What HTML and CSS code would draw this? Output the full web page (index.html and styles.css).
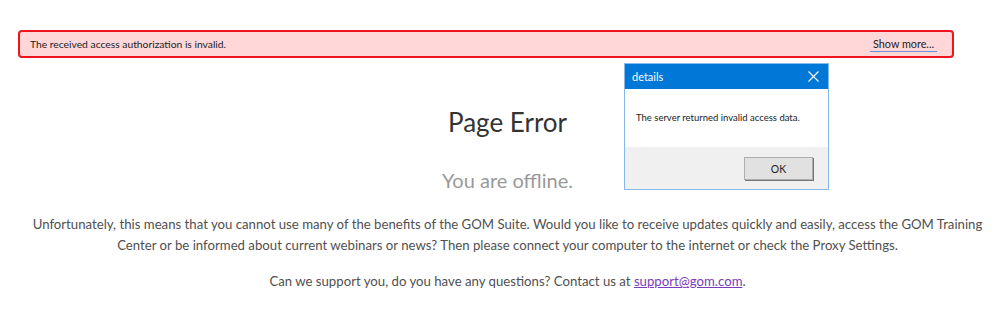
FILE: index.html
```html
<!DOCTYPE html>
<html lang="en">
<head>
    <meta charset="UTF-8">
    <meta name="viewport" content="width=device-width, initial-scale=1.0">
    <title>Page Error</title>
    <link rel="stylesheet" href="styles.css">
</head>
<body>
    <!-- Error banner -->
    <div class="alert">
        <span class="alert-text">The received access authorization is invalid.</span>
        <a href="#" class="show-more">Show more...</a>
    </div>

    <!-- Offline message -->
    <div class="content">
        <h1 class="title">Page Error</h1>
        <h2 class="subtitle">You are offline.</h2>
        <p class="text">Unfortunately, this means that you cannot use many of the benefits of the GOM Suite. Would you like to receive updates quickly and easily, access the GOM Training Center or be informed about current webinars or news? Then please connect your computer to the internet or check the Proxy Settings.</p>
        <p class="text contact">Can we support you, do you have any questions? Contact us at <a href="#" class="mail">support@gom.com</a>.</p>
    </div>

    <!-- Details dialog -->
    <div class="dialog">
        <div class="dialog-title">
            <span>details</span>
            <svg class="dialog-close" width="11" height="11" viewBox="0 0 11 11">
                <path d="M0.5 0.5 L10.5 10.5 M10.5 0.5 L0.5 10.5" stroke="#fff" stroke-width="1.1" fill="none"/>
            </svg>
        </div>
        <div class="dialog-body">The server returned invalid access data.</div>
        <div class="dialog-footer">
            <button class="dialog-btn">OK</button>
        </div>
    </div>
</body>
</html>
```

FILE: styles.css
```css
body {
    margin: 0;
    padding: 30px 0 0;
    background: #fff;
    font-family: Lato, "Open Sans", sans-serif;
    color: #505050;
}
.alert {
    display: flex;
    justify-content: space-between;
    align-items: center;
    height: 24px;
    margin: 0 45px 0 18px;
    padding: 0 15px 0 10px;
    border: 2px solid #f0141e;
    border-radius: 4px;
    background-color: #ffd7d8;
    font-size: 10.3px;
    color: #222;
}
.show-more {
    color: #222;
    text-decoration: none;
    padding: 0 3px 1px;
    border-bottom: 1px solid #6d8fcf;
    font-size: 10.8px;
}
.content {
    padding: 0 0 0 16px;
    text-align: center;
}
.title {
    margin: 47px 0 0;
    font-size: 26px;
    line-height: 34px;
    font-weight: normal;
    color: #333;
}
.subtitle {
    margin: 29px 0 0;
    font-size: 20px;
    line-height: 24px;
    font-weight: normal;
    color: #999;
}
.text {
    margin: 22px 0 0;
    font-size: 13.2px;
    line-height: 21px;
}
.contact {
    margin-top: 15px;
}
.mail {
    color: #7a3cb8;
}
.dialog {
    position: absolute;
    left: 624px;
    top: 63px;
    width: 203px;
    border: 1px solid #88b8ea;
    background: #fff;
    font-size: 9.5px;
    color: #222;
}
.dialog-title {
    display: flex;
    justify-content: space-between;
    align-items: center;
    height: 25px;
    padding: 0 9px 0 7px;
    background-color: #0078d7;
    color: #fff;
    font-size: 11px;
}
.dialog-body {
    height: 58px;
    padding-left: 11px;
    line-height: 58px;
    white-space: nowrap;
}
.dialog-footer {
    display: flex;
    justify-content: flex-end;
    height: 42px;
    padding: 10px 15px 0 0;
    box-sizing: border-box;
    background-color: #f0f0f0;
}
.dialog-btn {
    width: 69px;
    height: 23px;
    border: 1px solid #adadad;
    box-shadow: 1px 1px 0 #777;
    background: #e1e1e1;
    font-family: Lato, sans-serif;
    font-size: 10.5px;
    color: #222;
}
```
